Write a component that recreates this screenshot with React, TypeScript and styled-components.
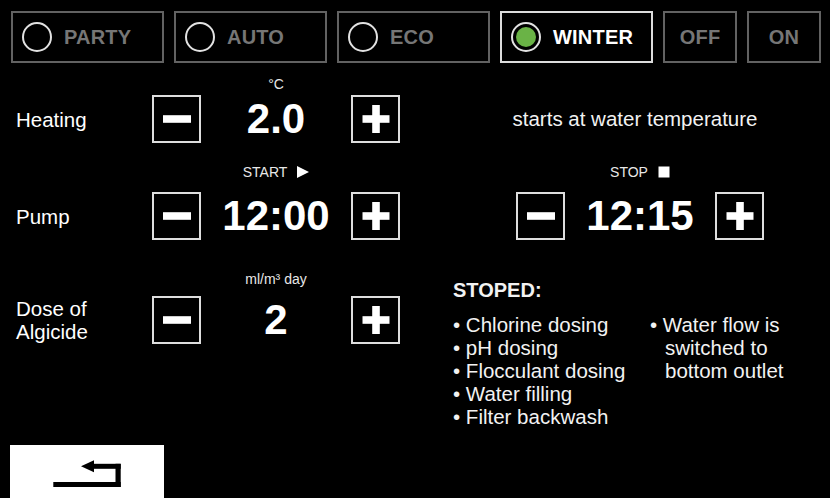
import React from "react";
import styled, { createGlobalStyle } from "styled-components";

const GlobalStyle = createGlobalStyle`
  html, body { margin: 0; padding: 0; background: #000; }
  body { font-family: "Liberation Sans", Arial, sans-serif; }
  * { box-sizing: border-box; }
`;

const CAP_H = 16;

const Screen = styled.div`
  width: 830px;
  height: 498px;
  overflow: hidden;
  background: #000;
  color: #fff;
  display: flex;
  flex-direction: column;
  font-family: "Liberation Sans", Arial, sans-serif;
`;

const TopBar = styled.div`
  display: flex;
  gap: 10px;
  padding: 11px 0 0 11px;
`;

const ModeButton = styled.div<{ $w: number; $active?: boolean; $center?: boolean }>`
  width: ${(p) => p.$w}px;
  height: 52px;
  border: 2px solid ${(p) => (p.$active ? "#dcdcdc" : "#626262")};
  display: flex;
  align-items: center;
  justify-content: ${(p) => (p.$center ? "center" : "flex-start")};
  gap: 12px;
  padding-left: ${(p) => (p.$center ? 0 : 9)}px;
  color: ${(p) => (p.$active ? "#fff" : "#767676")};
  font-size: 20px;
  font-weight: bold;
  letter-spacing: 0.2px;
`;

const Radio = styled.div`
  width: 30px;
  height: 30px;
  border-radius: 50%;
  border: 2px solid #e2e2e2;
  display: flex;
  align-items: center;
  justify-content: center;
  flex-shrink: 0;
`;

const RadioDot = styled.div`
  width: 20px;
  height: 20px;
  border-radius: 50%;
  background: #6ab346;
`;

const Row = styled.div<{ $top: number }>`
  display: grid;
  grid-template-columns: 152px 248px 430px;
  align-items: start;
  margin-top: ${(p) => p.$top}px;
`;

const Side = styled.div`
  padding-left: 50px;
`;

const Label = styled.div<{ $gap: number }>`
  padding: ${(p) => CAP_H + p.$gap}px 0 0 16px;
  height: ${(p) => CAP_H + p.$gap + 48}px;
  display: flex;
  align-items: center;
  font-size: 20.5px;
  line-height: 23px;
  color: #fff;
`;

const Stepper = styled.div`
  width: 248px;
  display: flex;
  flex-direction: column;
  margin: 0 auto;
`;

const Caption = styled.div<{ $gap: number }>`
  height: ${CAP_H}px;
  line-height: ${CAP_H}px;
  font-size: 14px;
  color: #e8e8e8;
  display: flex;
  justify-content: center;
  align-items: center;
  gap: 10px;
  margin-bottom: ${(p) => p.$gap}px;
`;

const Controls = styled.div`
  height: 48px;
  display: flex;
  align-items: center;
  justify-content: space-between;
`;

const StepButton = styled.div`
  width: 49px;
  height: 48px;
  border: 2px solid #dedede;
  display: flex;
  align-items: center;
  justify-content: center;
`;

const Value = styled.div`
  font-size: 42px;
  line-height: 48px;
  font-weight: bold;
  color: #fff;
  text-align: center;
  flex: 1;
`;

const InfoCell = styled.div<{ $gap: number }>`
  padding-top: ${(p) => CAP_H + p.$gap}px;
  padding-right: 10px;
  height: ${(p) => CAP_H + p.$gap + 48}px;
  display: flex;
  align-items: center;
  justify-content: center;
  font-size: 20.5px;
  color: #f2f2f2;
`;

const StatusCell = styled.div`
  margin-top: 8px;
  padding-left: 3px;
  font-size: 20.5px;
  line-height: 23px;
  color: #f2f2f2;
`;

const StatusTitle = styled.div`
  font-weight: bold;
  font-size: 20px;
  margin-bottom: 11px;
`;

const StatusColumns = styled.div`
  display: grid;
  grid-template-columns: 197px 1fr;
`;

const BulletList = styled.ul`
  list-style: none;
  margin: 0;
  padding: 0;
`;

const Item = styled.li`
  padding-left: 15px;
  text-indent: -15px;
  white-space: pre-line;
`;

const Footer = styled.div`
  margin-top: auto;
  padding-left: 10px;
`;

const BackButton = styled.div`
  width: 154px;
  height: 53px;
  background: #fff;
  display: flex;
  align-items: center;
  justify-content: center;
`;

const MinusIcon = () => (
  <svg width="28" height="28" viewBox="0 0 28 28">
    <rect x="0" y="10.2" width="28" height="7.6" fill="#fff" />
  </svg>
);

const PlusIcon = () => (
  <svg width="28" height="28" viewBox="0 0 28 28">
    <rect x="0.5" y="10.2" width="27" height="7.6" fill="#fff" />
    <rect x="10.2" y="0" width="7.6" height="28" fill="#fff" />
  </svg>
);

const PlayIcon = () => (
  <svg width="12" height="12" viewBox="0 0 12 12">
    <polygon points="0,0 12,6 0,12" fill="#fff" />
  </svg>
);

const StopIcon = () => (
  <svg width="12" height="12" viewBox="0 0 12 12">
    <rect x="0.5" y="0.5" width="11" height="11" fill="#fff" />
  </svg>
);

const ReturnIcon = () => (
  <svg width="70" height="32" viewBox="0 0 70 32">
    <rect x="1.3" y="26" width="67.4" height="5" fill="#000" />
    <rect x="63.5" y="7.8" width="5.2" height="23.2" fill="#000" />
    <rect x="41" y="7.8" width="27.7" height="5" fill="#000" />
    <polygon points="29,10.3 42,4.3 42,16.3" fill="#000" />
  </svg>
);

type StepperProps = {
  caption: React.ReactNode;
  value: string;
  gap: number;
};

const StepperBlock = ({ caption, value, gap }: StepperProps) => (
  <Stepper>
    <Caption $gap={gap}>{caption}</Caption>
    <Controls>
      <StepButton>
        <MinusIcon />
      </StepButton>
      <Value>{value}</Value>
      <StepButton>
        <PlusIcon />
      </StepButton>
    </Controls>
  </Stepper>
);

const modes = [
  { name: "PARTY", w: 153 },
  { name: "AUTO", w: 153 },
  { name: "ECO", w: 153 },
  { name: "WINTER", w: 153, active: true },
];

export default function App() {
  return (
    <>
      <GlobalStyle />
      <Screen>
        <TopBar>
          {modes.map((m) => (
            <ModeButton key={m.name} $w={m.w} $active={m.active}>
              <Radio>{m.active && <RadioDot />}</Radio>
              {m.name}
            </ModeButton>
          ))}
          <ModeButton $w={74} $center>
            OFF
          </ModeButton>
          <ModeButton $w={74} $center>
            ON
          </ModeButton>
        </TopBar>

        <Row $top={13}>
          <Label $gap={3}>Heating</Label>
          <StepperBlock caption="°C" value="2.0" gap={3} />
          <Side>
            <InfoCell $gap={3}>starts at water temperature</InfoCell>
          </Side>
        </Row>

        <Row $top={21}>
          <Label $gap={12}>Pump</Label>
          <StepperBlock
            caption={
              <>
                <span>START</span>
                <PlayIcon />
              </>
            }
            value="12:00"
            gap={12}
          />
          <Side>
            <StepperBlock
              caption={
                <>
                  <span>STOP</span>
                  <StopIcon />
                </>
              }
              value="12:15"
              gap={12}
            />
          </Side>
        </Row>

        <Row $top={31}>
          <Label $gap={9}>
            Dose of
            <br />
            Algicide
          </Label>
          <StepperBlock caption="ml/m³ day" value="2" gap={9} />
          <Side>
            <StatusCell>
              <StatusTitle>STOPED:</StatusTitle>
              <StatusColumns>
                <BulletList>
                  <Item>• Chlorine dosing</Item>
                  <Item>• pH dosing</Item>
                  <Item>• Flocculant dosing</Item>
                  <Item>• Water filling</Item>
                  <Item>• Filter backwash</Item>
                </BulletList>
                <BulletList>
                  <Item>{"• Water flow is\nswitched to\nbottom outlet"}</Item>
                </BulletList>
              </StatusColumns>
            </StatusCell>
          </Side>
        </Row>

        <Footer>
          <BackButton>
            <ReturnIcon />
          </BackButton>
        </Footer>
      </Screen>
    </>
  );
}
